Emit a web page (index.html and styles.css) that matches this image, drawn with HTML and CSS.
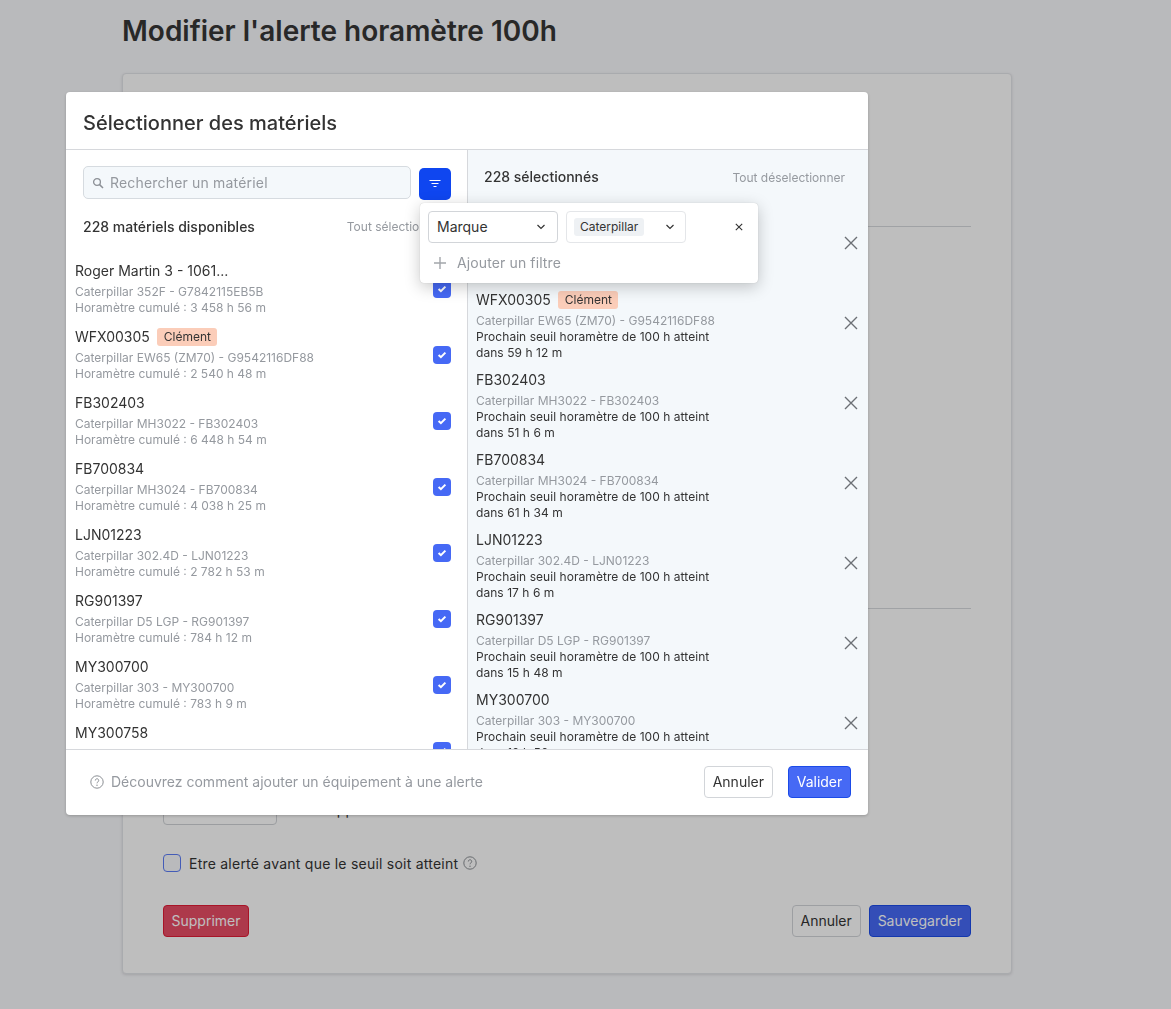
FILE: index.html
```html
<!DOCTYPE html>
<html lang="fr">
<head>
<meta charset="utf-8">
<title>Modifier l'alerte horamètre 100h</title>
<link rel="stylesheet" href="styles.css">
</head>
<body>
<main class="page">
  <h1 class="page-title">Modifier l'alerte horamètre 100h</h1>
  <section class="card">
    <div class="section-a"></div>
    <hr class="divider">
    <div class="section-b"></div>
    <hr class="divider">
    <div class="field-row">
      <div class="field-input"></div>
      <span class="field-label">h d'application</span>
    </div>
    <div class="check-row">
      <span class="check-empty"></span>
      <span class="check-label">Etre alerté avant que le seuil soit atteint</span>
      <svg class="help" width="14" height="14" viewBox="0 0 14 14"><circle cx="7" cy="7" r="6.2" fill="none" stroke="#8b8f94"/><path d="M5.3 5.5a1.7 1.7 0 1 1 2.6 1.4c-.6.4-.9.7-.9 1.4" fill="none" stroke="#8b8f94"/><circle cx="7" cy="10.2" r=".7" fill="#8b8f94"/></svg>
    </div>
    <div class="actions">
      <button class="btn btn-danger">Supprimer</button>
      <div class="actions-right">
        <button class="btn btn-cancel">Annuler</button>
        <button class="btn btn-primary">Sauvegarder</button>
      </div>
    </div>
  </section>
</main>
<div class="overlay"></div>
<div class="modal">
  <header class="modal-head">Sélectionner des matériels</header>
  <div class="modal-body">
    <div class="col-left">
      <div class="search-row">
        <div class="search">
          <svg width="12" height="12" viewBox="0 0 12 12"><circle cx="5" cy="5" r="3.4" fill="none" stroke="#8c9096" stroke-width="1.3"/><path d="M7.6 7.6 11 11" stroke="#8c9096" stroke-width="1.5"/></svg>
          <span>Rechercher un matériel</span>
        </div>
        <button class="filter-btn"><svg width="12" height="10" viewBox="0 0 12 10"><path d="M.5 1.5h11M2.5 4.5h7M4.5 7.5h3" stroke="#fff" stroke-width="1.2" fill="none"/></svg></button>
      </div>
      <div class="count-row">
        <strong>228 matériels disponibles</strong>
        <span class="link-muted">Tout sélectionner</span>
      </div>
      <div class="list-left">
        <div class="item-l"><div><div class="name">Roger Martin 3 - 1061...</div><div class="sub">Caterpillar 352F - G7842115EB5B</div><div class="sub">Horamètre cumulé : 3 458 h 56 m</div></div><span class="check"><svg width="10" height="8" viewBox="0 0 10 8"><path d="M1.6 4 3.9 6.2 8.4 1.6" stroke="#fff" stroke-width="2" fill="none"/></svg></span></div>
        <div class="item-l"><div><div class="name">WFX00305<span class="tag">Clément</span></div><div class="sub">Caterpillar EW65 (ZM70) - G9542116DF88</div><div class="sub">Horamètre cumulé : 2 540 h 48 m</div></div><span class="check"><svg width="10" height="8" viewBox="0 0 10 8"><path d="M1.6 4 3.9 6.2 8.4 1.6" stroke="#fff" stroke-width="2" fill="none"/></svg></span></div>
        <div class="item-l"><div><div class="name">FB302403</div><div class="sub">Caterpillar MH3022 - FB302403</div><div class="sub">Horamètre cumulé : 6 448 h 54 m</div></div><span class="check"><svg width="10" height="8" viewBox="0 0 10 8"><path d="M1.6 4 3.9 6.2 8.4 1.6" stroke="#fff" stroke-width="2" fill="none"/></svg></span></div>
        <div class="item-l"><div><div class="name">FB700834</div><div class="sub">Caterpillar MH3024 - FB700834</div><div class="sub">Horamètre cumulé : 4 038 h 25 m</div></div><span class="check"><svg width="10" height="8" viewBox="0 0 10 8"><path d="M1.6 4 3.9 6.2 8.4 1.6" stroke="#fff" stroke-width="2" fill="none"/></svg></span></div>
        <div class="item-l"><div><div class="name">LJN01223</div><div class="sub">Caterpillar 302.4D - LJN01223</div><div class="sub">Horamètre cumulé : 2 782 h 53 m</div></div><span class="check"><svg width="10" height="8" viewBox="0 0 10 8"><path d="M1.6 4 3.9 6.2 8.4 1.6" stroke="#fff" stroke-width="2" fill="none"/></svg></span></div>
        <div class="item-l"><div><div class="name">RG901397</div><div class="sub">Caterpillar D5 LGP - RG901397</div><div class="sub">Horamètre cumulé : 784 h 12 m</div></div><span class="check"><svg width="10" height="8" viewBox="0 0 10 8"><path d="M1.6 4 3.9 6.2 8.4 1.6" stroke="#fff" stroke-width="2" fill="none"/></svg></span></div>
        <div class="item-l"><div><div class="name">MY300700</div><div class="sub">Caterpillar 303 - MY300700</div><div class="sub">Horamètre cumulé : 783 h 9 m</div></div><span class="check"><svg width="10" height="8" viewBox="0 0 10 8"><path d="M1.6 4 3.9 6.2 8.4 1.6" stroke="#fff" stroke-width="2" fill="none"/></svg></span></div>
        <div class="item-l"><div><div class="name">MY300758</div></div><span class="check"><svg width="10" height="8" viewBox="0 0 10 8"><path d="M1.6 4 3.9 6.2 8.4 1.6" stroke="#fff" stroke-width="2" fill="none"/></svg></span></div>
      </div>
    </div>
    <div class="col-right">
      <div class="selected-head">
        <strong>228 sélectionnés</strong>
        <span class="link-muted">Tout déselectionner</span>
      </div>
      <div class="list-right">
        <div class="item-r"><div><div class="name">Roger Martin 3 - 1061...</div><div class="sub">Caterpillar 352F - G7842115EB5B</div><div class="next">Prochain seuil horamètre de 100 h atteint<br>dans 42 h 4 m</div></div><svg class="remove" width="14" height="14" viewBox="0 0 14 14"><path d="M1 1 13 13M13 1 1 13" stroke="#6c7075" stroke-width="1.4"/></svg></div>
        <div class="item-r"><div><div class="name">WFX00305<span class="tag">Clément</span></div><div class="sub">Caterpillar EW65 (ZM70) - G9542116DF88</div><div class="next">Prochain seuil horamètre de 100 h atteint<br>dans 59 h 12 m</div></div><svg class="remove" width="14" height="14" viewBox="0 0 14 14"><path d="M1 1 13 13M13 1 1 13" stroke="#6c7075" stroke-width="1.4"/></svg></div>
        <div class="item-r"><div><div class="name">FB302403</div><div class="sub">Caterpillar MH3022 - FB302403</div><div class="next">Prochain seuil horamètre de 100 h atteint<br>dans 51 h 6 m</div></div><svg class="remove" width="14" height="14" viewBox="0 0 14 14"><path d="M1 1 13 13M13 1 1 13" stroke="#6c7075" stroke-width="1.4"/></svg></div>
        <div class="item-r"><div><div class="name">FB700834</div><div class="sub">Caterpillar MH3024 - FB700834</div><div class="next">Prochain seuil horamètre de 100 h atteint<br>dans 61 h 34 m</div></div><svg class="remove" width="14" height="14" viewBox="0 0 14 14"><path d="M1 1 13 13M13 1 1 13" stroke="#6c7075" stroke-width="1.4"/></svg></div>
        <div class="item-r"><div><div class="name">LJN01223</div><div class="sub">Caterpillar 302.4D - LJN01223</div><div class="next">Prochain seuil horamètre de 100 h atteint<br>dans 17 h 6 m</div></div><svg class="remove" width="14" height="14" viewBox="0 0 14 14"><path d="M1 1 13 13M13 1 1 13" stroke="#6c7075" stroke-width="1.4"/></svg></div>
        <div class="item-r"><div><div class="name">RG901397</div><div class="sub">Caterpillar D5 LGP - RG901397</div><div class="next">Prochain seuil horamètre de 100 h atteint<br>dans 15 h 48 m</div></div><svg class="remove" width="14" height="14" viewBox="0 0 14 14"><path d="M1 1 13 13M13 1 1 13" stroke="#6c7075" stroke-width="1.4"/></svg></div>
        <div class="item-r"><div><div class="name">MY300700</div><div class="sub">Caterpillar 303 - MY300700</div><div class="next">Prochain seuil horamètre de 100 h atteint<br>dans 19 h 50 m</div></div><svg class="remove" width="14" height="14" viewBox="0 0 14 14"><path d="M1 1 13 13M13 1 1 13" stroke="#6c7075" stroke-width="1.4"/></svg></div>
      </div>
    </div>
  </div>
  <footer class="modal-foot">
    <div class="foot-help">
      <svg width="14" height="14" viewBox="0 0 14 14"><circle cx="7" cy="7" r="6.2" fill="none" stroke="#8b8f94"/><path d="M5.3 5.5a1.7 1.7 0 1 1 2.6 1.4c-.6.4-.9.7-.9 1.4" fill="none" stroke="#8b8f94"/><circle cx="7" cy="10.2" r=".7" fill="#8b8f94"/></svg>
      <span>Découvrez comment ajouter un équipement à une alerte</span>
    </div>
    <div class="foot-actions">
      <button class="btn btn-white">Annuler</button>
      <button class="btn btn-primary btn-validate">Valider</button>
    </div>
  </footer>
  <div class="popover">
    <div class="filter-line">
      <div class="select select-brand">Marque<svg width="10" height="6" viewBox="0 0 10 6"><path d="M1.5 1 5 4.5 8.5 1" stroke="#333" stroke-width="1.2" fill="none"/></svg></div>
      <div class="select select-value"><span class="chip">Caterpillar</span><svg width="10" height="6" viewBox="0 0 10 6"><path d="M1.5 1 5 4.5 8.5 1" stroke="#333" stroke-width="1.2" fill="none"/></svg></div>
      <svg class="pop-close" width="8" height="8" viewBox="0 0 8 8"><path d="M.8.8 7.2 7.2M7.2.8.8 7.2" stroke="#333" stroke-width="1.1"/></svg>
    </div>
    <div class="add-filter">
      <svg width="12" height="12" viewBox="0 0 12 12"><path d="M6 0v12M0 6h12" stroke="#a3a6ab" stroke-width="1.4"/></svg>
      <span>Ajouter un filtre</span>
    </div>
  </div>
</div>
</body>
</html>
```
FILE: styles.css
```css
* { box-sizing: border-box; }
html, body { margin: 0; height: 100%; }
body {
  height: 1009px;
  overflow: hidden;
  background: #f7f8fb;
  font-family: Inter, "Liberation Sans", sans-serif;
  font-size: 14px;
  color: #333;
}
.page { width: 890px; margin-left: 122px; padding-top: 14px; }
.page-title { margin: 0 0 25px; font-size: 28px; line-height: 34px; font-weight: 600; color: #363636; }
.card {
  background: #fefefe;
  border: 1px solid #e2e4e8;
  border-radius: 4px;
  box-shadow: 0 1px 3px rgba(0,0,0,.12);
  padding: 0 40px 36px;
  height: 901px;
}
.section-a { height: 152px; }
.section-b { height: 381px; }
.divider { margin: 0; border: 0; border-top: 1px solid #d6d8dc; height: 1px; }
.field-row { margin-top: 184px; display: flex; align-items: center; gap: 27px; height: 32px; }
.field-input { width: 114px; height: 32px; border: 1px solid #cfd2d6; border-radius: 4px; background: #fff; }
.check-row { margin-top: 29px; height: 18px; display: flex; align-items: center; gap: 8px; }
.check-empty { width: 18px; height: 18px; border: 1px solid #5b7bf5; border-radius: 4px; background: #f7f8fb; }
.check-label { letter-spacing: .23px; }
.help { margin-left: -3px; }
.actions { margin-top: 33px; display: flex; justify-content: space-between; }
.actions-right { display: flex; gap: 8px; }
.btn {
  height: 32px;
  padding: 0 8px;
  border: 1px solid #d2d5d9;
  border-radius: 4px;
  background: #fefefe;
  font: 14px/1 Inter, "Liberation Sans", sans-serif;
  color: #333;
}
.btn-white { background: #fff; }
.btn-cancel { width: 69px; padding: 0; }
.btn-danger { width: 86px; padding: 0; background: #e74d65; border-color: #e01b35; color: #fff; }
.btn-primary { background: #4669f5; border-color: #1b4be8; color: #fff; }
.btn-validate { width: 63px; padding: 0; }
.overlay { position: fixed; inset: 0; background: rgba(0,0,0,.25); }
.modal {
  position: absolute;
  left: 66px;
  top: 92px;
  width: 802px;
  height: 723px;
  background: #fff;
  border-radius: 4px;
  box-shadow: 0 1px 3px rgba(0,0,0,.2);
  display: flex;
  flex-direction: column;
}
.modal-head {
  height: 58px;
  flex: none;
  padding: 4px 17px 0;
  display: flex;
  align-items: center;
  font-size: 20px;
  font-weight: 500;
  color: #333;
  border-bottom: 1px solid #d6d8dc;
}
.modal-body { flex: 1; min-height: 0; display: flex; }
.col-left { width: 402px; flex: none; border-right: 1px solid #d6d8dc; display: flex; flex-direction: column; overflow: hidden; }
.col-right { flex: 1; background: #f4f8fb; display: flex; flex-direction: column; overflow: hidden; }
.search-row { padding: 16px 16px 0 17px; display: flex; gap: 8px; align-items: flex-start; }
.search {
  flex: 1;
  height: 33px;
  display: flex;
  align-items: center;
  gap: 6px;
  padding-left: 8px;
  background: #f4f8fb;
  border: 1px solid #d6dbe0;
  border-radius: 5px;
  color: #95999f;
  letter-spacing: .18px;
}
.filter-btn {
  width: 32px;
  height: 32px;
  margin-top: 2px;
  border: 0;
  padding: 0;
  border-radius: 5px;
  background: #0f46f0;
  display: flex;
  align-items: center;
  justify-content: center;
}
.count-row { padding: 0 22px 0 17px; margin-top: 16px; height: 20px; display: flex; justify-content: space-between; align-items: center; }
strong { font-weight: 500; color: #333; }
.link-muted { font-size: 12px; color: #95999f; }
.list-left { flex: 1; min-height: 0; overflow: hidden; padding: 25px 16px 0 9px; }
.item-l { height: 54px; margin-bottom: 12px; display: flex; justify-content: space-between; align-items: center; }
.item-l > div { align-self: flex-start; }
.item-l .name { margin-bottom: 3px; }
.name { height: 20px; line-height: 20px; display: flex; align-items: center; color: #333; }
.sub { font-size: 12px; line-height: 16px; color: #95999f; }
.tag { margin-left: 7px; height: 18px; padding: 0 6px 0 7px; background: #fbcdb9; border-radius: 3px; font-size: 12px; line-height: 18px; color: #333; }
.check { width: 18px; height: 18px; margin-top: 2px; border-radius: 4px; background: #4669f5; display: flex; align-items: center; justify-content: center; }
.selected-head { height: 60px; flex: none; padding: 17px 23px 0 16px; display: flex; justify-content: space-between; align-items: center; line-height: 20px; }
.selected-head strong { margin-bottom: 23px; }
.selected-head .link-muted { margin-bottom: 21px; }
.list-right { flex: 1; min-height: 0; overflow: hidden; padding-right: 10px; padding-left: 8px; }
.item-r { height: 71px; margin-bottom: 9px; display: flex; justify-content: space-between; align-items: center; }
.item-r .name { margin-bottom: 3px; }
.item-r .remove { margin-top: -5px; }
.next { font-size: 12px; line-height: 16px; color: #333; letter-spacing: .05px; }
.modal-foot {
  height: 66px;
  flex: none;
  border-top: 1px solid #d6d8dc;
  padding: 0 17px 2px 24px;
  display: flex;
  align-items: center;
  justify-content: space-between;
}
.foot-help { display: flex; align-items: center; gap: 7px; color: #95999f; }
.foot-actions { display: flex; gap: 15px; }
.popover {
  position: absolute;
  left: 354px;
  top: 111px;
  width: 338px;
  height: 80px;
  background: #fff;
  border-radius: 4px;
  box-shadow: 0 4px 16px rgba(0,0,0,.22), 0 0 1px rgba(0,0,0,.25);
  padding: 8px;
}
.filter-line { display: flex; align-items: center; gap: 8px; }
.select { height: 32px; display: flex; align-items: center; justify-content: space-between; border-radius: 4px; background: #fff; }
.select-brand { width: 130px; border: 1px solid #d2d5d9; padding: 0 11px 1px 8px; }
.select-value { width: 120px; border: 1px solid #e4e6e9; padding: 0 10px 0 7px; }
.chip { height: 18px; padding: 0 6px; background: #eef1f4; border-radius: 3px; font-size: 12px; line-height: 18px; }
.pop-close { margin-left: 41px; }
.add-filter { margin-top: 9px; padding-left: 6px; height: 21px; display: flex; align-items: center; gap: 11px; color: #95999f; letter-spacing: .12px; }
```
